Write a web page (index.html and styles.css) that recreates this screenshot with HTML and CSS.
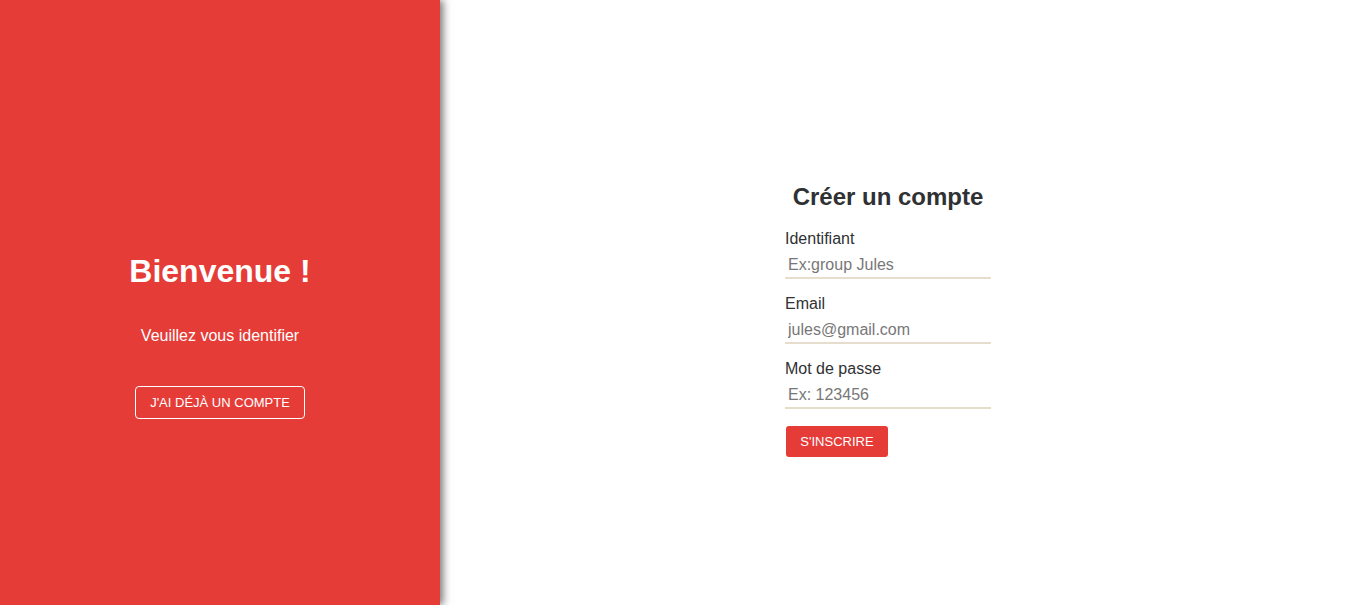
FILE: index.html
```html
<!DOCTYPE html>
<html lang="fr">
<head>
<meta charset="utf-8">
<title>Créer un compte</title>
<link rel="stylesheet" href="styles.css">
</head>
<body>
<div class="page">
  <aside class="welcome">
    <h1 class="welcome-title">Bienvenue !</h1>
    <p class="welcome-text">Veuillez vous identifier</p>
    <button class="ghost-btn" type="button">J'ai déjà un compte</button>
  </aside>
  <main class="signup">
    <h2 class="signup-title">Créer un compte</h2>
    <form class="form">
      <label class="field-label" for="id">Identifiant</label>
      <input class="field-input" id="id" type="text" placeholder="Ex:group Jules">
      <label class="field-label" for="email">Email</label>
      <input class="field-input" id="email" type="email" placeholder="jules@gmail.com">
      <label class="field-label" for="pw">Mot de passe</label>
      <input class="field-input" id="pw" type="password" placeholder="Ex: 123456">
      <button class="submit-btn" type="button">S'inscrire</button>
    </form>
  </main>
</div>
</body>
</html>
```
FILE: styles.css
```css
* { box-sizing: border-box; }
html, body { margin: 0; padding: 0; }
body {
  font-family: Arial, "Liberation Sans", sans-serif;
  background: #fff;
}
.page {
  display: flex;
  height: 605px;
  overflow: hidden;
}
.welcome {
  width: 440px;
  flex: 0 0 440px;
  background: #e53c37;
  color: #fff;
  display: flex;
  flex-direction: column;
  align-items: center;
  padding-top: 253px;
  box-shadow: 3px 0 8px rgba(0,0,0,0.55);
  position: relative;
  z-index: 1;
}
.welcome-title {
  margin: 0;
  font-size: 32px;
  font-weight: bold;
  line-height: 37px;
}
.welcome-text {
  margin: 37px 0 0;
  font-size: 16px;
  line-height: 18px;
}
.ghost-btn {
  margin-top: 41px;
  width: 170px;
  height: 33px;
  background: transparent;
  border: 1px solid #fff;
  border-radius: 4px;
  color: #fff;
  font-family: Arial, "Liberation Sans", sans-serif;
  font-size: 13px;
  text-transform: uppercase;
  padding: 0;
}
.signup {
  flex: 1;
  display: flex;
  flex-direction: column;
  align-items: center;
  padding-top: 183px;
  padding-right: 13px;
}
.signup-title {
  margin: 0;
  font-size: 24px;
  line-height: 28px;
  font-weight: bold;
  color: #2f3133;
}
.form {
  width: 206px;
  display: flex;
  flex-direction: column;
  align-items: flex-start;
  margin-top: 19px;
}
.field-label {
  font-size: 16px;
  line-height: 18px;
  color: #2f3133;
}
.field-input {
  margin-top: 5px;
  margin-bottom: 16px;
  width: 206px;
  height: 26px;
  border: 0;
  border-bottom: 2px solid #e6ddcd;
  padding: 0 3px;
  font-family: Arial, "Liberation Sans", sans-serif;
  font-size: 16px;
  color: #333;
  outline: none;
  background: transparent;
}
.field-input::placeholder { color: #777; }
.submit-btn {
  margin-top: 1px;
  margin-left: 1px;
  width: 102px;
  height: 31px;
  border: 0;
  border-radius: 3px;
  background: #e53c37;
  color: #fff;
  font-family: Arial, "Liberation Sans", sans-serif;
  font-size: 13px;
  text-transform: uppercase;
  padding: 0;
}
```
